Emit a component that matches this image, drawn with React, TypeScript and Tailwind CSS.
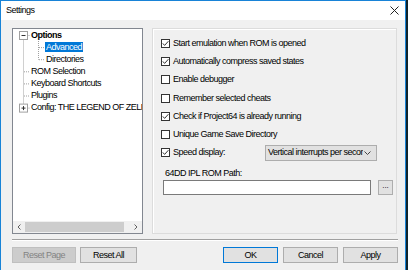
import React from 'react';

const font = "font-['Liberation_Sans',Arial,sans-serif] text-[9px] tracking-[-0.5px] leading-none text-black";

function CheckBox({ checked }: { checked: boolean }) {
  return (
    <svg width="9" height="9" viewBox="0 0 9 9" className="shrink-0">
      <rect x="0.5" y="0.5" width="8" height="8" fill="#fff" stroke="#333" />
      {checked && <polyline points="1.8,4.4 3.6,6.4 7.4,2.2" fill="none" stroke="#333" strokeWidth="1" />}
    </svg>
  );
}

const options = [
  { label: 'Start emulation when ROM is opened', checked: true },
  { label: 'Automatically compress saved states', checked: true },
  { label: 'Enable debugger', checked: false },
  { label: 'Remember selected cheats', checked: false },
  { label: 'Check if Project64 is already running', checked: true },
  { label: 'Unique Game Save Directory', checked: false },
];

const tree = [
  { label: 'Options', level: 0, bold: true },
  { label: 'Advanced', level: 1, selected: true },
  { label: 'Directories', level: 1 },
  { label: 'ROM Selection', level: 0 },
  { label: 'Keyboard Shortcuts', level: 0 },
  { label: 'Plugins', level: 0 },
  { label: 'Config: THE LEGEND OF ZELDA', level: 0 },
];

function TreeLines() {
  // connector lines + expand boxes, in tree-inner coordinates
  const dot = { stroke: '#a0a0a0', strokeDasharray: '1 1', strokeWidth: 1 };
  const y = (i: number) => i * 12.1 + 6.5;
  return (
    <svg className="absolute left-0 top-0 pointer-events-none" width="130" height="100">
      <line x1="10.5" y1="10.5" x2="10.5" y2={y(6) - 4} {...dot} />
      <line x1="14.5" y1={y(0)} x2="17" y2={y(0)} {...dot} />
      {[3, 4, 5].map((i) => (
        <line key={i} x1="11" y1={y(i)} x2="17" y2={y(i)} {...dot} />
      ))}
      <line x1="14.5" y1={y(6)} x2="17" y2={y(6)} {...dot} />
      <line x1="25.5" y1="12" x2="25.5" y2={y(2)} {...dot} />
      <line x1="26" y1={y(1)} x2="32" y2={y(1)} {...dot} />
      <line x1="26" y1={y(2)} x2="32" y2={y(2)} {...dot} />
      <rect x="6.5" y={y(0) - 4} width="8" height="8" fill="#fff" stroke="#a0a0a0" />
      <line x1="8.5" y1={y(0)} x2="12.5" y2={y(0)} stroke="#333" />
      <rect x="6.5" y={y(6) - 4} width="8" height="8" fill="#fff" stroke="#a0a0a0" />
      <line x1="8.5" y1={y(6)} x2="12.5" y2={y(6)} stroke="#333" />
      <line x1="10.5" y1={y(6) - 2} x2="10.5" y2={y(6) + 2} stroke="#333" />
    </svg>
  );
}

function Button({ label, w, primary, disabled }: { label: string; w: string; primary?: boolean; disabled?: boolean }) {
  return (
    <div
      className={`${w} h-[16px] flex items-center justify-center border ${
        disabled
          ? 'bg-[#cccccc] border-[#bfbfbf] text-[#838383]'
          : primary
          ? 'bg-[#e1e1e1] border-[#0078d7]'
          : 'bg-[#e1e1e1] border-[#adadad]'
      }`}
    >
      <span className={disabled ? 'text-[#838383]' : ''}>{label}</span>
    </div>
  );
}

export default function App() {
  return (
    <div className={`flex w-[408px] h-[270px] bg-[#10242c] ${font}`}>
      <div className="w-[406px] h-full flex flex-col border-x border-t border-[#1883d7] bg-[#f0f0f0]">
        {/* Title bar */}
        <div className="h-[19px] bg-white flex items-center justify-between pl-[5px] pr-[6px]">
          <span>Settings</span>
          <svg width="9" height="9" viewBox="0 0 9 9">
            <line x1="0.5" y1="0.5" x2="8.5" y2="8.5" stroke="#222" />
            <line x1="8.5" y1="0.5" x2="0.5" y2="8.5" stroke="#222" />
          </svg>
        </div>

        <div className="flex-1 flex flex-col pl-[11px] pr-[7px] pt-[8px]">
          <div className="flex h-[206px]">
            {/* Tree */}
            <div className="w-[131px] h-full border border-[#828790] bg-white flex flex-col">
              <div className="relative flex-1 overflow-hidden">
                <TreeLines />
                <div className="flex flex-col">
                  {tree.map((t) => (
                    <div
                      key={t.label}
                      className={`h-[12.1px] flex items-center whitespace-nowrap ${t.level === 1 ? 'pl-[32px]' : 'pl-[17px]'}`}
                    >
                      <span
                        className={`px-[1px] h-[10px] flex items-center ${t.bold ? 'font-bold' : ''} ${
                          t.selected ? 'bg-[#0078d7] text-white' : ''
                        }`}
                      >
                        {t.label}
                      </span>
                    </div>
                  ))}
                </div>
              </div>
              <div className="h-[12px] flex items-center bg-[#f0f0f0]">
                <div className="w-[12px] h-full flex items-center justify-center">
                  <svg width="4" height="6" viewBox="0 0 4 6">
                    <polyline points="3.5,0.5 1,3 3.5,5.5" fill="none" stroke="#606060" />
                  </svg>
                </div>
                <div className="flex-1 h-full py-[1px]">
                  <div className="w-[99px] h-full bg-[#cdcdcd]" />
                </div>
                <div className="w-[12px] h-full flex items-center justify-center">
                  <svg width="4" height="6" viewBox="0 0 4 6">
                    <polyline points="0.5,0.5 3,3 0.5,5.5" fill="none" stroke="#606060" />
                  </svg>
                </div>
              </div>
            </div>

            {/* Options group */}
            <div className="ml-[9px] w-[245px] h-full border border-[#dcdcdc] shadow-[inset_1px_1px_0_#fff] flex flex-col pl-[8px] pt-[5px]">
              {options.map((o) => (
                <div key={o.label} className="h-[18.3px] flex items-center gap-[3px] whitespace-nowrap">
                  <CheckBox checked={o.checked} />
                  <span>{o.label}</span>
                </div>
              ))}
              <div className="h-[18.3px] flex items-center whitespace-nowrap">
                <div className="w-[104px] flex items-center gap-[3px]">
                  <CheckBox checked />
                  <span>Speed display:</span>
                </div>
                <div className="w-[112px] h-[16px] flex items-center bg-[#e1e1e1] border border-[#adadad]">
                  <span className="w-[97px] pl-[2px] overflow-hidden">Vertical interrupts per second</span>
                  <svg width="7" height="4" viewBox="0 0 7 4" className="ml-[1px]">
                    <polyline points="0.5,0.5 3.5,3.5 6.5,0.5" fill="none" stroke="#444" />
                  </svg>
                </div>
              </div>
              <div className="mt-[5px] h-[12px] flex items-center pl-[4px]">64DD IPL ROM Path:</div>
              <div className="mt-[1px] flex items-center pl-[2px]">
                <div className="w-[208px] h-[15px] bg-white border border-[#7a7a7a]" />
                <div className="ml-[7px] w-[15px] h-[15px] bg-[#e1e1e1] border border-[#adadad] flex items-center justify-center text-[8px] tracking-normal pb-[3px]">
                  ...
                </div>
              </div>
            </div>
          </div>

          {/* Separator */}
          <div className="mt-[5px] border-t border-[#a0a0a0] border-b border-b-white" />

          {/* Buttons */}
          <div className="mt-[6px] flex items-center">
            <Button label="Reset Page" w="w-[64px]" disabled />
            <div className="ml-[4px]">
              <Button label="Reset All" w="w-[57px]" />
            </div>
            <div className="ml-auto flex gap-[5px]">
              <Button label="OK" w="w-[55px]" primary />
              <Button label="Cancel" w="w-[55px]" />
              <Button label="Apply" w="w-[55px]" />
            </div>
          </div>
        </div>
      </div>
    </div>
  );
}
